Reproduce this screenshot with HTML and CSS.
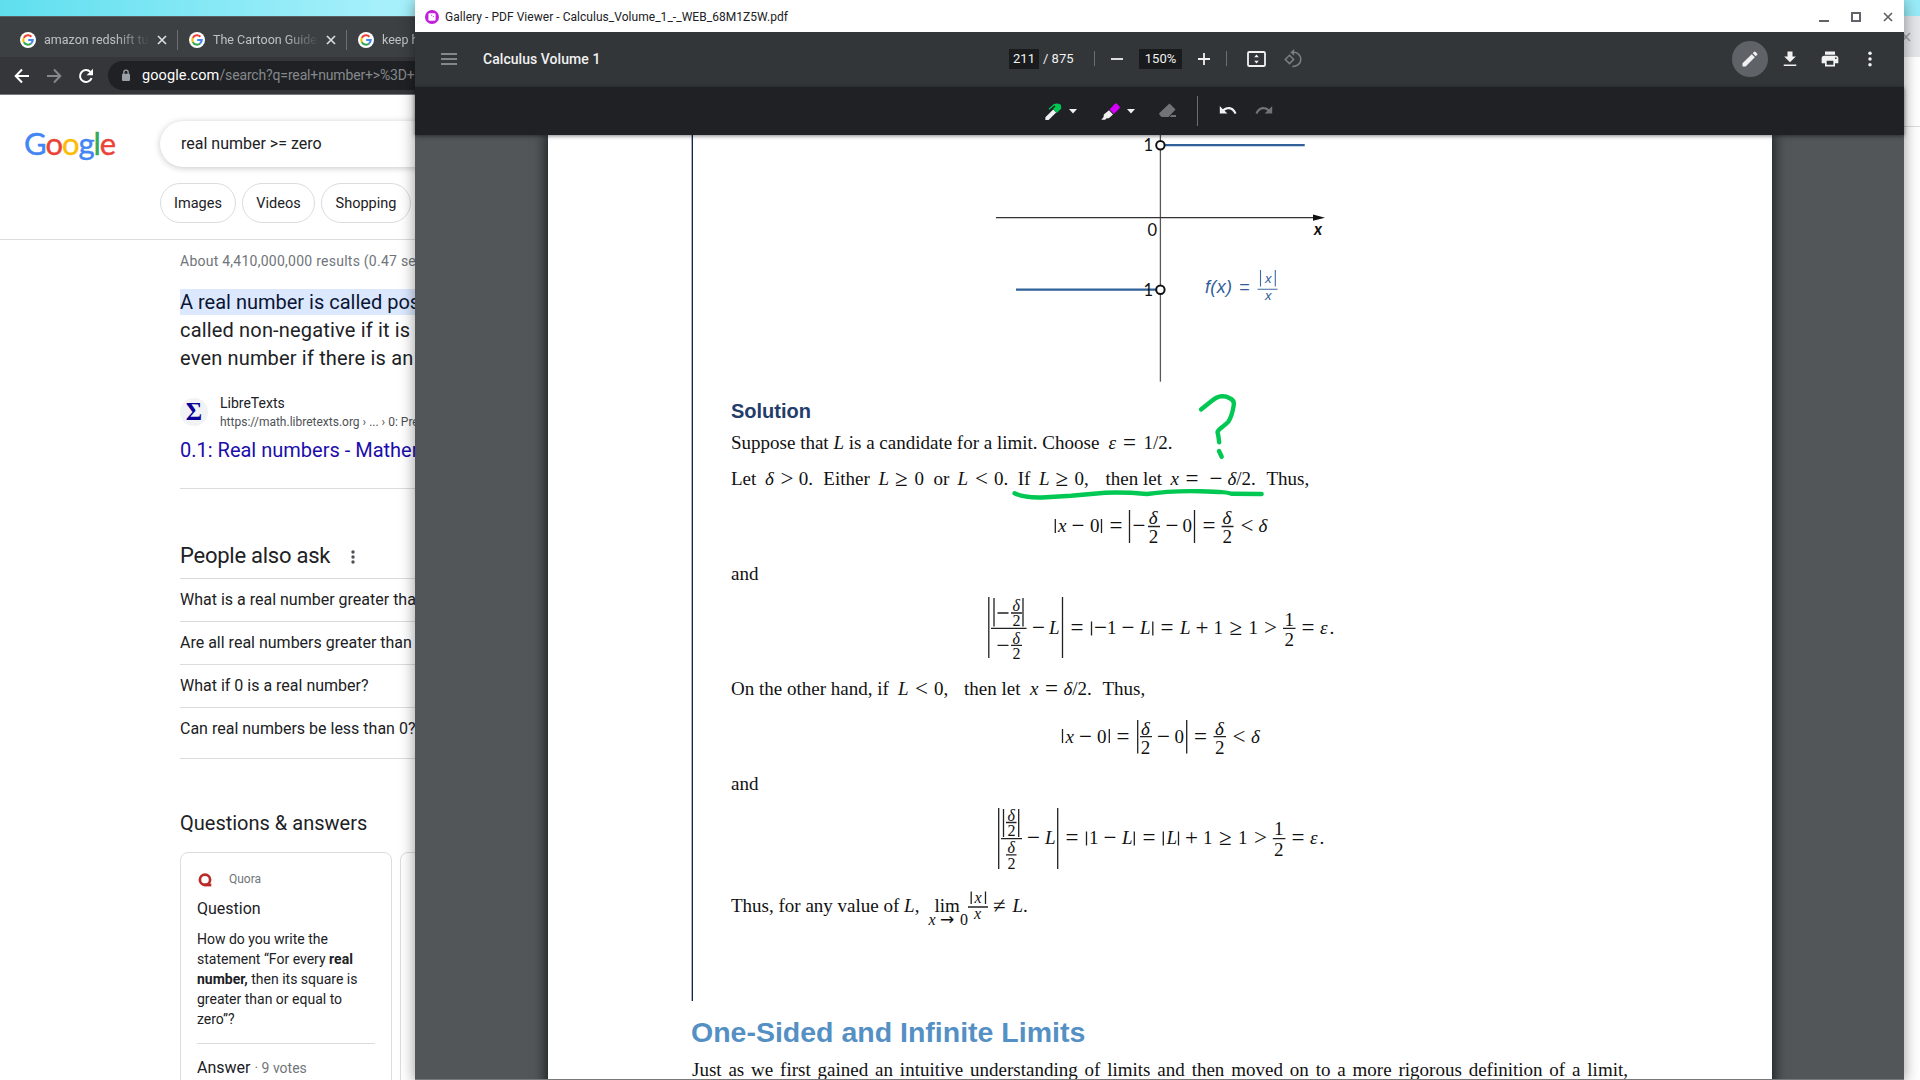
FILE: index.html
```html
<!DOCTYPE html>
<html lang="en">
<head>
<meta charset="utf-8">
<title>Calculus Volume 1</title>
<link rel="stylesheet" href="styles.css">
</head>
<body>
<svg class="defs" width="0" height="0" aria-hidden="true">
  <symbol id="g-icon" viewBox="0 0 16 16">
    <circle cx="8" cy="8" r="8" fill="#fff"/>
    <g fill="none" stroke-width="2.1">
      <path d="M11.4 4.7A4.7 4.7 0 0 0 3.8 5.9" stroke="#ea4335"/>
      <path d="M3.8 5.9A4.7 4.7 0 0 0 3.8 10.1" stroke="#fbbc05"/>
      <path d="M3.8 10.1A4.7 4.7 0 0 0 11.1 11.5" stroke="#34a853"/>
      <path d="M11.1 11.5A4.7 4.7 0 0 0 12.7 8H8.2" stroke="#4285f4"/>
    </g>
  </symbol>
  <symbol id="close" viewBox="0 0 10 10"><path d="M1 1l8 8M9 1l-8 8" stroke="currentColor" stroke-width="1.7"/></symbol>
</svg>

<div class="desktop">
  <section class="browser">
    <div class="tabs">
      <div class="tab"><svg class="fav"><use href="#g-icon"/></svg><span>amazon redshift tutorial</span><svg class="x"><use href="#close"/></svg></div>
      <div class="tab"><svg class="fav"><use href="#g-icon"/></svg><span>The Cartoon Guide to</span><svg class="x"><use href="#close"/></svg></div>
      <div class="tab"><svg class="fav"><use href="#g-icon"/></svg><span>keep hold</span></div>
    </div>
    <div class="navbar">
      <svg class="nav" viewBox="0 0 16 16"><path d="M15 8H2M8 1.5L1.7 8 8 14.5" fill="none" stroke="#fff" stroke-width="2"/></svg>
      <svg class="nav" viewBox="0 0 16 16"><path d="M1 8h13M8 1.5L14.3 8 8 14.5" fill="none" stroke="#85878a" stroke-width="2"/></svg>
      <svg class="nav" viewBox="0 0 16 16"><path d="M13.6 10.2A6 6 0 1 1 12.4 3.9" fill="none" stroke="#fff" stroke-width="2"/><path d="M15 .8v6.4H8.6z" fill="#fff"/></svg>
      <div class="omnibox">
        <svg class="lock" viewBox="0 0 10 13"><rect x="1" y="4.8" width="8" height="7.2" rx="1" fill="#9aa0a6"/><path d="M2.8 5V3.400a2.200 2.200 0 0 1 4.400 0V5" fill="none" stroke="#9aa0a6" stroke-width="1.3"/></svg>
        <span class="url"><b>google.com</b>/search?q=real+number+&gt;%3D+zero</span>
      </div>
    </div>
    <div class="page">
      <header class="head">
        <div class="logo"><i class="b">G</i><i class="r">o</i><i class="y">o</i><i class="b">g</i><i class="g">l</i><i class="r">e</i></div>
        <div class="search">real number &gt;= zero</div>
        <nav class="pills"><a class="p1">Images</a><a class="p2">Videos</a><a class="p3">Shopping</a></nav>
      </header>
      <main class="results">
        <div class="stats">About 4,410,000,000 results (0.47 seconds)</div>
        <div class="snippet"><mark>A real number is called positive if</mark><br><span>called non-negative if it is greater<br>even number if there is an integer</span></div>
        <div class="source">
          <span class="sigma">Σ</span>
          <div><div class="site">LibreTexts</div><div class="path">https://math.libretexts.org › ... › 0: Preliminaries</div></div>
        </div>
        <div class="link">0.1: Real numbers - Mathematics</div>
        <div class="paa">People also ask <svg width="4" height="14" viewBox="0 0 4 14"><g fill="#4d5156"><circle cx="2" cy="2" r="1.7"/><circle cx="2" cy="7" r="1.7"/><circle cx="2" cy="12" r="1.7"/></g></svg></div>
        <div class="q">What is a real number greater than 0?</div>
        <div class="q">Are all real numbers greater than 0?</div>
        <div class="q">What if 0 is a real number?</div>
        <div class="q last">Can real numbers be less than 0?</div>
        <div class="qa">Questions &amp; answers</div>
        <div class="cards">
          <article class="card">
            <div class="by"><svg width="14" height="14" viewBox="0 0 14 14"><circle cx="7" cy="6.8" r="5.1" fill="none" stroke="#b92b27" stroke-width="2.7"/><path d="M6.5 10.5h6.8V13.4H6.5z" fill="#b92b27"/></svg><span>Quora</span></div>
            <div class="ct">Question</div>
            <div class="body">How do you write the<br>statement “For every <b>real<br>number,</b> then its square is<br>greater than or equal to<br>zero”?</div>
            <div class="ans">Answer <small>· 9 votes</small></div>
          </article>
          <article class="card"></article>
        </div>
      </main>
    </div>
  </section>

  <section class="behind"><div class="bt"><svg class="x"><use href="#close"/></svg></div><div class="bn"></div></section>

  <section class="viewer">
    <div class="title">
      <svg width="14" height="14" viewBox="0 0 14 14"><circle cx="7" cy="7" r="7" fill="#c01fdb"/><rect x="3.4" y="3.2" width="7.2" height="7.6" rx="1.2" fill="#fff"/><path d="M6.2 5.2h1M8.3 6.2v1" stroke="#c01fdb"/></svg>
      <span>Gallery - PDF Viewer - Calculus_Volume_1_-_WEB_68M1Z5W.pdf</span>
      <div class="wb">
        <svg width="10" height="10" viewBox="0 0 10 10"><path d="M0 9h10" stroke="#5f6368" stroke-width="2"/></svg>
        <svg width="10" height="10" viewBox="0 0 10 10"><path d="M1 1h8v8H1z" fill="none" stroke="#5f6368" stroke-width="2"/></svg>
        <svg class="x"><use href="#close"/></svg>
      </div>
    </div>
    <div class="bar">
      <div class="bl"><svg width="16" height="12" viewBox="0 0 16 12"><path d="M0 1h16M0 6h16M0 11h16" stroke="#84878a" stroke-width="2"/></svg><strong>Calculus Volume 1</strong></div>
      <div class="bc">
        <span class="inp pg">211</span><span class="of">/ 875</span><i class="sep s1"></i>
        <svg width="12" height="12" viewBox="0 0 12 12"><path d="M0 6h12" stroke="#f1f1f1" stroke-width="1.8"/></svg>
        <span class="inp zm">150%</span>
        <svg width="12" height="12" viewBox="0 0 12 12"><path d="M0 6h12M6 0v12" stroke="#f1f1f1" stroke-width="1.8"/></svg>
        <i class="sep s2"></i>
        <svg class="fit" width="19" height="16" viewBox="0 0 19 16"><rect x="1" y="1" width="17" height="14" rx="1.3" fill="none" stroke="#f1f1f1" stroke-width="1.8"/><path d="M9.5 3.500L11.800 6.300H7.200zM9.500 12.500L11.800 9.700H7.200z" fill="#f1f1f1"/></svg>
        <svg class="rot" width="20" height="20" viewBox="0 0 20 20"><g fill="none" stroke="#7b7e80" stroke-width="1.6"><path d="M6.5 6.3l4.1 4.2-4.1 4.1-4.2-4.1z"/><path d="M9.3 3.5A7 7 0 1 1 9.4 17.2"/></g><path d="M11.2 0v6.8L7.4 3.4z" fill="#7b7e80"/></svg>
      </div>
      <div class="br">
        <span class="round"><svg viewBox="0 0 24 24"><path d="M3 17.2V21h3.8L17.8 9.9l-3.7-3.7zM20.7 7a1 1 0 0 0 0-1.4l-2.3-2.3a1 1 0 0 0-1.4 0l-1.8 1.8 3.7 3.7z"/></svg></span>
        <span><svg viewBox="0 0 24 24"><path d="M19 9h-4V3H9v6H5l7 7zM4.5 18.5v2h15v-2z"/></svg></span>
        <span><svg viewBox="0 0 24 24"><path d="M19 8H5a3 3 0 0 0-3 3v6h4v4h12v-4h4v-6a3 3 0 0 0-3-3zm-3 11H8v-5h8zm3-7a1 1 0 1 1 0-2 1 1 0 0 1 0 2zM18 3H6v4h12z"/></svg></span>
        <span><svg viewBox="0 0 24 24"><circle cx="12" cy="5" r="2.1"/><circle cx="12" cy="12" r="2.1"/><circle cx="12" cy="19" r="2.1"/></svg></span>
      </div>
    </div>
    <div class="ink">
      <svg width="17" height="17" viewBox="0 0 17 17"><path d="M8.2 6.5l3 3L3.6 16.9H.4v-2.6z" fill="#f1f1f1"/><path d="M8 6L11.8 10 16.3 5.4 15.7 1.6 12.4.6 9 .9 3.6 5.8 4.4 6.8 9.4 2.6 10.6 3.2z" fill="#00c853"/></svg>
      <svg class="caret" width="8" height="5" viewBox="0 0 8 5"><path d="M0 0h8L4 4.4z" fill="#f1f1f1"/></svg>
      <svg class="hl" width="19" height="17" viewBox="0 0 19 17"><path d="M8 7.2l4 4.4-4.2 3.6-2.2.1L4.200 16.8H.3l2.300-2.800.2-2.400z" fill="#f1f1f1"/><path d="M8.600 6.400L14.200.6h1.500l3 3.200v1.400L12.700 11z" fill="#d500f9"/></svg>
      <svg class="caret" width="8" height="5" viewBox="0 0 8 5"><path d="M0 0h8L4 4.4z" fill="#f1f1f1"/></svg>
      <svg class="er" width="18" height="16" viewBox="0 0 18 16"><path d="M10.500.4L16.500 6.400 9.500 14H2.500L.4 11.500V10z" fill="#727374"/><path d="M10.500 14l2-2H17v2z" fill="#727374"/></svg>
      <i class="sep s3"></i>
      <svg width="18" height="10" viewBox="0 0 18 10"><path d="M.8 0v7.600h7.600L5.600 4.800C9 2 13.500 3 15.600 8l1.900-.7C15 .6 8.700-.6 3.900 3.200z" fill="#f1f1f1"/></svg>
      <svg class="redo" width="18" height="10" viewBox="0 0 18 10"><path d="M17.200 0v7.600H9.600l2.800-2.800C9 2 4.500 3 2.400 8L.5 7.300C3 .6 9.300-.6 14.100 3.200z" fill="#727374"/></svg>
    </div>
    <div class="canvas">
      <div class="sheet">
        <div class="example">
          <svg class="blk" height="255" viewBox="731 135 900 255">
            <path d="M1160.400 135V381.700" stroke="#58585b" stroke-width="1.300"/>
            <path d="M996 217.700H1316" stroke="#333" stroke-width="1.200"/>
            <path d="M1313 214.600L1325 217.700 1313 220.800z" fill="#111"/>
            <path d="M1165 145.200H1304.700M1016 289.700H1156" stroke="#2f6098" stroke-width="2.200"/>
            <circle cx="1160.400" cy="145.200" r="4.200" fill="#fff" stroke="#111" stroke-width="2"/>
            <circle cx="1160.400" cy="289.800" r="4.200" fill="#fff" stroke="#111" stroke-width="2"/>
            <g class="fig"><text x="1143.500" y="150.500">1</text><text x="1143.500" y="295.500">1</text><text x="1147.500" y="235.500">0</text><text x="1314" y="235" class="bi">x</text></g>
            <g class="fn"><text x="1205" y="292.500" textLength="27">f(x)</text><text x="1239" y="293">=</text><g class="sm"><text x="1265" y="283">x</text><text x="1265" y="300">x</text></g></g>
            <path d="M1260.500 270V286.500M1275.300 270V286.500M1257.500 289.300H1277.500" stroke="#3f6ba0" stroke-width="1.100"/>
          </svg>
          <h3>Solution</h3>
          <svg class="blk" height="34" viewBox="731 428 900 34"><text x="731" y="448.600">Suppose that <tspan class="it">L</tspan> is a candidate for a limit. Choose<tspan class="it" x="1108.500">ε</tspan><tspan class="op" x="1123">=</tspan><tspan x="1143.500">1/2.</tspan></text></svg>
          <svg class="blk" height="40" viewBox="731 462 900 40"><text y="485"><tspan x="731">Let</tspan><tspan class="it" x="765">δ</tspan><tspan class="op" x="780.500">&gt;</tspan><tspan x="798.700">0.</tspan><tspan x="823.300">Either</tspan><tspan class="it" x="878.500">L</tspan><tspan class="op" x="895">≥</tspan><tspan x="914.500">0</tspan><tspan x="933.500">or</tspan><tspan class="it" x="957.500">L</tspan><tspan class="op" x="975">&lt;</tspan><tspan x="994">0.</tspan><tspan x="1017.700">If</tspan><tspan class="it" x="1039">L</tspan><tspan class="op" x="1055.500">≥</tspan><tspan x="1074.500">0,</tspan><tspan x="1105.500">then let</tspan><tspan class="it" x="1170.500">x</tspan><tspan class="op" x="1185.500">=</tspan><tspan class="op" x="1209.500">−</tspan><tspan class="it" x="1227.500">δ</tspan>/2.<tspan x="1266.500">Thus,</tspan></text></svg>
          <svg class="blk" height="58" viewBox="731 502 900 58">
            <text y="532"><tspan class="it" x="1058">x</tspan><tspan class="op" x="1071.500">−</tspan><tspan x="1090">0</tspan><tspan class="op" x="1109.500">=</tspan><tspan class="op" x="1132.500">−</tspan><tspan class="op" x="1165.500">−</tspan><tspan x="1182.500">0</tspan><tspan class="op" x="1202.500">=</tspan><tspan class="op" x="1240.500">&lt;</tspan><tspan class="it" x="1258.500">δ</tspan></text>
            <text class="it" x="1148.700" y="524">δ</text><text x="1148.700" y="542.500">2</text><text class="it" x="1222.500" y="524">δ</text><text x="1222.500" y="542.500">2</text>
            <path class="ln" d="M1055.300 519V533M1101.500 519V533M1129.500 510V543M1194.500 510V543M1148 526.500H1160M1221.500 526.500H1233.500"/>
          </svg>
          <p class="and">and</p>
          <svg class="blk eq2" height="81" viewBox="731 587 900 81">
            <text y="634"><tspan class="op" x="1032">−</tspan><tspan class="it" x="1049">L</tspan><tspan class="op" x="1070.500">=</tspan><tspan class="op" x="1094">−</tspan><tspan x="1107">1</tspan><tspan class="op" x="1121.500">−</tspan><tspan class="it" x="1140">L</tspan><tspan class="op" x="1160.500">=</tspan><tspan class="it" x="1180">L</tspan><tspan class="op" x="1195.500">+</tspan><tspan x="1213.500">1</tspan><tspan class="op" x="1229.500">≥</tspan><tspan x="1248.500">1</tspan><tspan class="op" x="1264">&gt;</tspan><tspan class="op" x="1301.500">=</tspan><tspan class="it" x="1320">ε</tspan><tspan x="1329.500">.</tspan></text>
            <text x="1284.500" y="626">1</text><text x="1284.500" y="646">2</text>
            <g class="s"><text class="it" x="1012.500" y="611">δ</text><text x="1012.500" y="625.500">2</text><text class="it" x="1012.500" y="643.500">δ</text><text x="1012.500" y="658.500">2</text></g>
            <path class="ln" d="M988.800 597V658M1062.500 597V658M994 598V626.500M1023 598V626.500M997.500 613H1008.500M1011 613H1022M991 628.400H1026.500M997.500 645.300H1008.500M1011 645.300H1022M1091.500 621.500V635.500M1152.800 621.500V635.500M1283 628.400H1295.500"/>
          </svg>
          <svg class="blk" height="44" viewBox="731 668 900 44"><text y="695"><tspan x="731">On the other hand, if</tspan><tspan class="it" x="898">L</tspan><tspan class="op" x="915">&lt;</tspan><tspan x="934">0,</tspan><tspan x="964">then let</tspan><tspan class="it" x="1030">x</tspan><tspan class="op" x="1045">=</tspan><tspan class="it" x="1063.500">δ</tspan>/2.<tspan x="1102.500">Thus,</tspan></text></svg>
          <svg class="blk" height="58" viewBox="731 712 900 58">
            <text y="742.500"><tspan class="it" x="1065.500">x</tspan><tspan class="op" x="1079">−</tspan><tspan x="1097">0</tspan><tspan class="op" x="1116.500">=</tspan><tspan class="op" x="1157">−</tspan><tspan x="1174.500">0</tspan><tspan class="op" x="1194">=</tspan><tspan class="op" x="1232.500">&lt;</tspan><tspan class="it" x="1251">δ</tspan></text>
            <text class="it" x="1141" y="735">δ</text><text x="1140.700" y="753.500">2</text><text class="it" x="1215" y="735">δ</text><text x="1215" y="753.500">2</text>
            <path class="ln" d="M1062.500 729V743M1109.300 729V743M1137.700 720V753.500M1186.700 720V753.500M1140 736.700H1152M1213.500 736.700H1226"/>
          </svg>
          <p class="and">and</p>
          <svg class="blk" height="83" viewBox="731 797 900 83">
            <text y="844"><tspan class="op" x="1027">−</tspan><tspan class="it" x="1045">L</tspan><tspan class="op" x="1065.500">=</tspan><tspan x="1089">1</tspan><tspan class="op" x="1103.500">−</tspan><tspan class="it" x="1122">L</tspan><tspan class="op" x="1142.500">=</tspan><tspan class="it" x="1166.500">L</tspan><tspan class="op" x="1185">+</tspan><tspan x="1203">1</tspan><tspan class="op" x="1219">≥</tspan><tspan x="1238">1</tspan><tspan class="op" x="1254">&gt;</tspan><tspan class="op" x="1291.500">=</tspan><tspan class="it" x="1310">ε</tspan><tspan x="1319.500">.</tspan></text>
            <text x="1274" y="834.500">1</text><text x="1274" y="856">2</text>
            <g class="s"><text class="it" x="1007.500" y="821">δ</text><text x="1007.500" y="835.700">2</text><text class="it" x="1007.500" y="853">δ</text><text x="1007.500" y="868.500">2</text></g>
            <path class="ln" d="M998.700 808V869M1057.700 808V869M1003.500 809V837M1018.700 809V837M1006 822.500H1016.500M1001 838.600H1022M1006 854.800H1016.500M1086.500 831.500V845.500M1134.300 831.500V845.500M1163.300 831.500V845.500M1178.500 831.500V845.500M1272.800 838.600H1285.400"/>
          </svg>
          <svg class="blk" height="121" viewBox="731 880 900 121">
            <text y="912.400"><tspan x="731">Thus, for any value of </tspan><tspan class="it">L</tspan>,<tspan x="934.500">lim</tspan><tspan class="op" x="993">≠</tspan><tspan class="it" x="1012.500">L</tspan>.</text>
            <text y="924.500" class="s"><tspan class="it" x="928.500">x</tspan><tspan x="940" class="arr">→</tspan><tspan x="960">0</tspan></text>
            <g class="s"><text class="it" x="974.500" y="902.500">x</text><text class="it" x="974" y="919">x</text></g>
            <path class="ln" d="M971.200 891.500V904M985.500 891.500V904M968 907H988"/>
          </svg>
        </div>
        <h2>One-Sided and Infinite Limits</h2>
        <p class="lead">Just as we first gained an intuitive understanding of limits and then moved on to a more rigorous definition of a limit,</p>
      </div>
      <svg class="marks" viewBox="1005 385 270 120"><g fill="none" stroke="#00c853" stroke-width="4.400" stroke-linecap="round" stroke-linejoin="round"><path d="M1201 409.500L1211 401.500Q1217 396.500 1221.700 396.300T1229 397.900Q1235 400 1233.600 406Q1232 416 1228.500 421.500C1225 426 1219 428 1217.500 432Q1218.500 436 1219.200 442.300M1219 451L1221.700 456.700"/><path d="M1014.600 493.300Q1024 498 1042 497.500L1071 495.700 1105 492.700Q1125 492 1147 494Q1170 490.500 1200 491.200T1231 493.700L1261.600 494"/></g></svg>
    </div>
  </section>
</div>
</body>
</html>
```
FILE: styles.css
```css
* { box-sizing: border-box; }
body { margin: 0; overflow: hidden; font-family: Roboto, "Liberation Sans", sans-serif; color: #202124; }
svg { display: block; flex: none; }
.defs { position: absolute; }
.desktop { position: relative; width: 1920px; height: 1080px; overflow: hidden; background: linear-gradient(90deg, #5fdfee, #a5f0fb 380px, #98ebf8); }
.x { width: 10px; height: 10px; }

/* browser window */
.browser { position: absolute; left: 0; top: 16px; width: 440px; height: 1064px; overflow: hidden; background: #fff; white-space: nowrap; }
.tabs { display: flex; height: 41px; padding: 3px 0 0 9px; background: #3c4043; box-shadow: inset 0 1px #5a6166; }
.tab { display: flex; align-items: center; width: 169px; height: 42px; flex: none; padding-left: 11px; color: #bdc1c6; font-size: 12.500px; padding-bottom: 1px; }
.tab span { flex: none; width: 106px; margin: 0 7px 0 8px; overflow: hidden; -webkit-mask-image: linear-gradient(90deg, #000 72px, transparent 106px); mask-image: linear-gradient(90deg, #000 72px, transparent 106px); }
.tab .x { color: #dadce0; }
.tab::after { content: ""; flex: none; width: 1px; height: 20px; margin-left: 10px; background: #6b6f73; }
.fav { width: 16px; height: 16px; }
.navbar { display: flex; align-items: center; height: 38px; padding-left: 14px; gap: 16px; background: #35363a; border-bottom: 1px solid #77797c; }
.nav { width: 16px; height: 16px; }
.omnibox { display: flex; align-items: center; gap: 11px; width: 600px; flex: none; height: 29px; margin-left: -2px; padding-left: 13px; border-radius: 15px; background: #202124; }
.lock { width: 10px; height: 13px; }
.url { color: #85898d; font-size: 14px; letter-spacing: -.15px; }
.url b { font-weight: 400; font-size: 14.500px; color: #fff; letter-spacing: .1px; }
.head { display: grid; grid-template-columns: 160px 600px; grid-template-rows: 46px 40px; row-gap: 16px; height: 145px; padding-top: 26px; border-bottom: 1px solid #dadce0; }
.logo { padding-left: 24px; font: 400 31px/44px Lato, sans-serif; letter-spacing: -1.050px; }
.logo i { font-style: normal; -webkit-text-stroke: .4px; }
.b { color: #4285f4; } .r { color: #ea4335; } .y { color: #fbbc05; } .g { color: #34a853; }
.search { padding-left: 21px; line-height: 46px; font-size: 16px; border-radius: 23px; box-shadow: 0 1px 6px rgba(32,33,36,.25); }
.pills { grid-column: 2; display: flex; gap: 6px; }
.pills a { height: 40px; line-height: 39.500px; text-align: center; border: 1px solid #dadce0; border-radius: 20px; font-size: 14.500px; }
.p1 { width: 76px; } .p2 { width: 73px; } .p3 { width: 90px; }
.results { padding: 11px 0 0 180px; }
.stats { height: 37px; line-height: 21px; font-size: 14px; letter-spacing: .25px; color: #70757a; }
.snippet { font-size: 20px; line-height: 28px; height: 105px; }
.snippet span { letter-spacing: .17px; }
.snippet mark { background: #dbe8fe; color: #0b1533; padding: 1px 0; }
.source { display: flex; gap: 12px; height: 38px; align-items: center; }
.sigma { flex: none; width: 28px; height: 28px; border-radius: 14px; background: #f1f3f4; text-align: center; font: bold 25px/28px "Liberation Serif", serif; color: #0c0299; }
.site { font-size: 14px; line-height: 18px; margin-bottom: 2px; }
.path { font-size: 12px; line-height: 16px; color: #4d5156; }
.link { height: 58px; line-height: 38px; font-size: 20px; color: #1a0dab; border-bottom: 1px solid #dadce0; }
.paa { display: flex; align-items: center; gap: 21px; margin-top: 52px; height: 37px; padding-bottom: 9px; font-size: 22px; letter-spacing: -.25px; }
.paa svg { margin-top: 3px; }
.q { height: 43px; border-top: 1px solid #dadce0; font-size: 16px; line-height: 42px; }
.last { height: 52px; border-bottom: 1px solid #dadce0; }
.qa { margin-top: 45px; height: 48px; line-height: 38px; font-size: 20px; }
.cards { display: flex; gap: 8px; }
.card { width: 212px; flex: none; height: 240px; padding: 19px 16px 0; border: 1px solid #dadce0; border-radius: 8px; }
.by { display: flex; align-items: center; gap: 17px; height: 14px; padding-left: 1px; font-size: 12px; color: #70757a; }
.by svg { margin-top: 2px; }
.ct { margin-top: 11px; font-size: 16px; line-height: 24px; }
.body { margin-top: 4px; font-size: 14px; line-height: 20px; padding: 4px 0 13px; border-bottom: 1px solid #dadce0; height: 119px; }
.ans { margin-top: 12px; font-size: 16px; line-height: 24px; }
.ans small { font-size: 14px; color: #70757a; }

/* window edge visible at the right */
.behind { position: absolute; left: 1890px; top: 16px; width: 40px; height: 1064px; background: #fff; }
.bt { height: 41px; background: #e4e6ea; padding: 16px 0 0 11px; color: #a2a5a9; }
.bn { height: 70px; border-bottom: 1px solid #dadce0; }

/* viewer window */
.viewer { position: absolute; left: 415px; top: 0; width: 1489px; height: 1080px; display: flex; flex-direction: column; overflow: visible; background: #525659; box-shadow: 0 2px 14px rgba(0,0,0,.42); border-bottom: 1px solid #77797b; z-index: 2; }
.title { display: flex; align-items: center; gap: 6px; height: 32px; flex: none; padding: 1px 11px 0 10px; background: #fff; font-size: 12px; letter-spacing: .04px; }
.wb { display: flex; gap: 22px; margin-left: auto; color: #5f6368; }
.bar { display: grid; grid-template-columns: 594px 1fr auto; align-items: center; height: 55px; flex: none; padding: 0 16px 2px 0; background: #323639; color: #f1f1f1; font-size: 14px; }
.bl { display: flex; align-items: center; gap: 26px; padding-left: 26px; }
.bl strong { font-weight: 500; font-size: 14px; letter-spacing: .05px; }
.bc { display: flex; align-items: center; }
.inp { height: 20px; line-height: 20px; background: #191b1c; text-align: center; font-size: 13px; }
.pg { width: 30px; } .zm { width: 43px; margin: 0 16px; }
.of { margin-left: 4px; width: 51px; font-size: 13px; }
.sep { width: 1px; height: 15px; background: #6b6e70; }
.s1 { margin-right: 16px; } .s2 { margin: 0 20px 0 16px; }
.rot { margin-left: 17px; }
.br { display: flex; gap: 4px; fill: #f1f1f1; }
.br span { display: grid; place-items: center; width: 36px; height: 36px; border-radius: 18px; }
.br svg { width: 20px; height: 20px; }
.br .round { background: #5f6368; }
.ink { display: flex; align-items: center; height: 48px; flex: none; padding-left: 630px; background: #202124; position: relative; z-index: 1; box-shadow: 0 1px 4px rgba(0,0,0,.5); }
.caret { margin-left: 7px; }
.hl { margin-left: 24px; }
.er { margin-left: 24px; }
.s3 { height: 30px; margin: 0 21px 0 20px; }
.redo { margin-left: 18px; }
.canvas { position: relative; height: 944px; overflow: hidden; }
.sheet { width: 1224px; height: 960px; margin-left: 133px; background: #fff; box-shadow: 0 0 12px 2px rgba(0,0,0,.7); padding-left: 144px; color: #111; font-family: "Liberation Serif", serif; font-size: 19px; }
.example { height: 866px; border-left: 1px solid #14244f; box-shadow: -1px 0 #a9b0c2; padding-left: 38px; }
.blk { width: 900px; fill: #111; font-size: 19px; }
.blk .it { font-style: italic; }
.blk .op { font-size: 23px; baseline-shift: -.8px; }
.blk .s { font-size: 16px; }
.blk .arr { font: 17px "DejaVu Sans", sans-serif; }
.ln { fill: none; stroke: #222; stroke-width: 1.300; }
.fig { font-family: Lato, sans-serif; font-size: 16.500px; }
.bi { font-weight: 700; font-style: italic; }
.fn { font-family: "Liberation Sans", sans-serif; font-size: 18px; font-style: italic; fill: #2f6098; }
.sm { font-size: 13px; }
h3 { margin: 0; height: 38px; font: bold 20px/42px "Liberation Sans", sans-serif; color: #243c6c; }
.and { margin: 0; height: 27px; line-height: 27px; }
h2 { margin: 0 0 0 -1px; height: 57px; font: bold 28.500px/62px "Liberation Sans", sans-serif; color: #5590c4; }
.lead { margin: 0; width: 936px; line-height: 24px; white-space: nowrap; text-align-last: justify; }
.marks { position: absolute; left: 590px; top: 250px; width: 270px; height: 120px; }
```
